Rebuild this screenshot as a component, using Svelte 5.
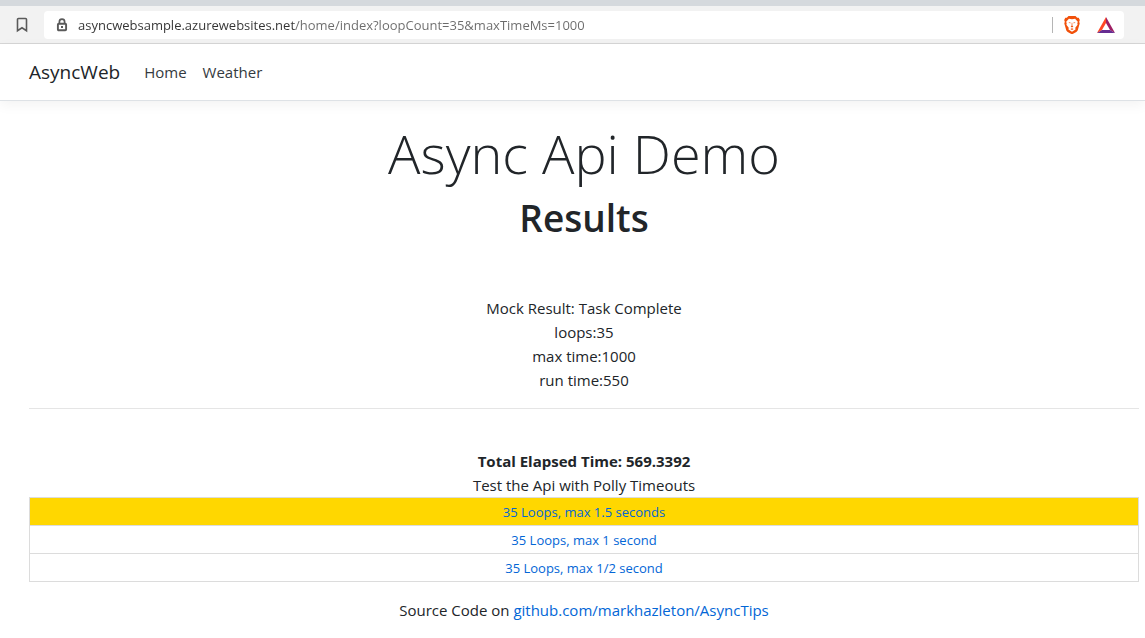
<script>
  let address = $state('asyncwebsample.azurewebsites.net/home/index?loopCount=35&maxTimeMs=1000');

  const results = ['Mock Result: Task Complete', 'loops:35', 'max time:1000', 'run time:550'];
  const tests = [
    { label: '35 Loops, max 1.5 seconds', query: 'loopCount=35&maxTimeMs=1500', active: true },
    { label: '35 Loops, max 1 second', query: 'loopCount=35&maxTimeMs=1000', active: false },
    { label: '35 Loops, max 1/2 second', query: 'loopCount=35&maxTimeMs=500', active: false }
  ];
</script>

<div class="toolbar">
  <button class="icon" aria-label="Bookmark this page">
    <svg width="12" height="16" viewBox="0 0 12 16">
      <path d="M2.5 1.5h7a1 1 0 0 1 1 1v11.2L6 10.8l-4.5 2.9V2.5a1 1 0 0 1 1-1z" fill="none" stroke="#5a5a5a" stroke-width="1.6" />
    </svg>
  </button>
  <div class="omnibox">
    <svg class="lock" width="12" height="14" viewBox="0 0 12 14" aria-hidden="true">
      <path d="M3.4 5.5V3.7a2.6 2.6 0 0 1 5.2 0v1.8" fill="none" stroke="#5a5a5a" stroke-width="1.7" />
      <rect x="1.9" y="5.7" width="8.2" height="6.6" rx=".8" fill="none" stroke="#5a5a5a" stroke-width="1.9" />
      <rect x="5" y="8" width="2" height="2" fill="#5a5a5a" />
    </svg>
    <input type="text" aria-label="Address" spellcheck="false" bind:value={address} />
    <span class="divider"></span>
    <button class="icon" aria-label="Shields">
      <svg width="16" height="18" viewBox="0 0 16 18">
        <path d="M4.5 0h7l1.7 1.8 1.5-.1 1.1 2.4-.6 1.6.5 1.8-1.8 6.3c-.3 1-.8 1.5-1.6 2.1L8.7 18H7.3l-3.6-2.1c-.8-.6-1.3-1.1-1.6-2.1L.3 7.5l.5-1.8-.6-1.6 1.1-2.4 1.5.1z" fill="#f1500a" />
        <path d="M4.9 2.7 8 3.2l3.1-.5 2.7 3.1-.5 1.6.3 1.4-2.3 3 .2 1.6L8 15.8l-3.5-2.4.2-1.6-2.3-3 .3-1.4-.5-1.6z" fill="#fff" />
        <path d="m4.4 6.2 2.2.4-.4 1zM11.6 6.2l-2.2.4.4 1zM7.7 6.8h.6l.1 3 1 .7L8 11.4l-1.4-.9 1-.7zM6.4 13 8 12.3l1.6.7L8 14z" fill="#f1500a" />
      </svg>
    </button>
    <button class="icon" aria-label="Rewards">
      <svg width="18" height="16" viewBox="0 0 18 16">
        <path d="M9 0 0 16l5-3 4-7z" fill="#ff4724" />
        <path d="M9 0v6l4 7 5 3z" fill="#9e1f63" />
        <path d="m0 16 5-3h8l5 3z" fill="#662d91" />
      </svg>
    </button>
  </div>
</div>

<header>
  <nav>
    <a class="brand" href="/">AsyncWeb</a>
    <a href="/home">Home</a>
    <a href="/weather">Weather</a>
  </nav>
</header>

<main>
  <h1>Async Api Demo</h1>
  <h2>Results</h2>
  <div class="results">
    {#each results as line}
      <div>{line}</div>
    {/each}
  </div>
  <hr />
  <div class="elapsed">Total Elapsed Time: 569.3392</div>
  <div id="tests-title">Test the Api with Polly Timeouts</div>
  <table aria-labelledby="tests-title">
    <tbody>
      {#each tests as test}
        <tr class:active={test.active}>
          <td><a href={'/home/index?' + test.query}>{test.label}</a></td>
        </tr>
      {/each}
    </tbody>
  </table>
  <p>Source Code on <a href="https://github.com/markhazleton/AsyncTips">github.com/markhazleton/AsyncTips</a></p>
</main>

<style>
  :global(body) {
    margin: 0;
    background: #fff;
    color: #212529;
    font: 15px/24px 'Open Sans', 'Noto Sans', sans-serif;
  }

  a {
    color: #0366d6;
    text-decoration: none;
  }

  .toolbar {
    display: flex;
    align-items: center;
    gap: 12px;
    padding: 5px 21px 4px 12px;
    border-top: 6px solid #d5d9dd;
    border-bottom: 1px solid #d6d6d6;
    background: #f2f2f2;
  }

  .icon {
    display: flex;
    align-items: center;
    justify-content: center;
    width: 20px;
    height: 20px;
    padding: 0;
    border: 0;
    background: none;
  }

  .omnibox {
    flex: 1;
    display: flex;
    align-items: center;
    gap: 14px;
    height: 28px;
    padding: 0 8px 0 12px;
    border-radius: 4px;
    background: #fff;
  }

  .lock {
    margin-right: -4px;
  }

  .omnibox input {
    flex: 1;
    min-width: 0;
    height: 28px;
    padding: 0;
    border: 0;
    outline: 0;
    background: linear-gradient(to right, #333 217px, #6b6b6b 217px);
    background-clip: text;
    -webkit-text-fill-color: transparent;
    font: 13px 'Open Sans', 'Noto Sans', sans-serif;
  }

  .divider {
    width: 1px;
    height: 16px;
    margin-right: -5px;
    background: #b5b5b5;
  }

  header {
    padding: 8px 29px;
    border-bottom: 1px solid #dee2e6;
    box-shadow: 0 4px 12px rgba(0, 0, 0, 0.05);
  }

  nav {
    display: flex;
    align-items: center;
    gap: 16px;
    height: 40px;
  }

  nav a {
    color: #343a40;
  }

  nav .brand {
    margin-right: 8px;
    color: #212529;
    font-size: 19px;
  }

  main {
    padding: 18px 6px 16px 29px;
    text-align: center;
  }

  h1 {
    margin: 0;
    font-size: 54px;
    font-weight: 300;
    line-height: 68px;
  }

  h2 {
    margin: 8px 0 56px;
    font-size: 37px;
    font-weight: 600;
    line-height: 45px;
  }

  hr {
    margin: 16px 0 40px;
    border: 0;
    border-top: 1px solid #e5e5e5;
  }

  .elapsed {
    font-weight: 700;
  }

  table {
    width: 100%;
    margin-bottom: 16px;
    border-collapse: collapse;
    font-size: 13px;
    line-height: 19px;
  }

  td {
    padding: 5px 4px 3px;
    border: 1px solid #dcdcdc;
  }

  .active {
    background: #ffd700;
  }

  p {
    margin: 0;
  }
</style>
